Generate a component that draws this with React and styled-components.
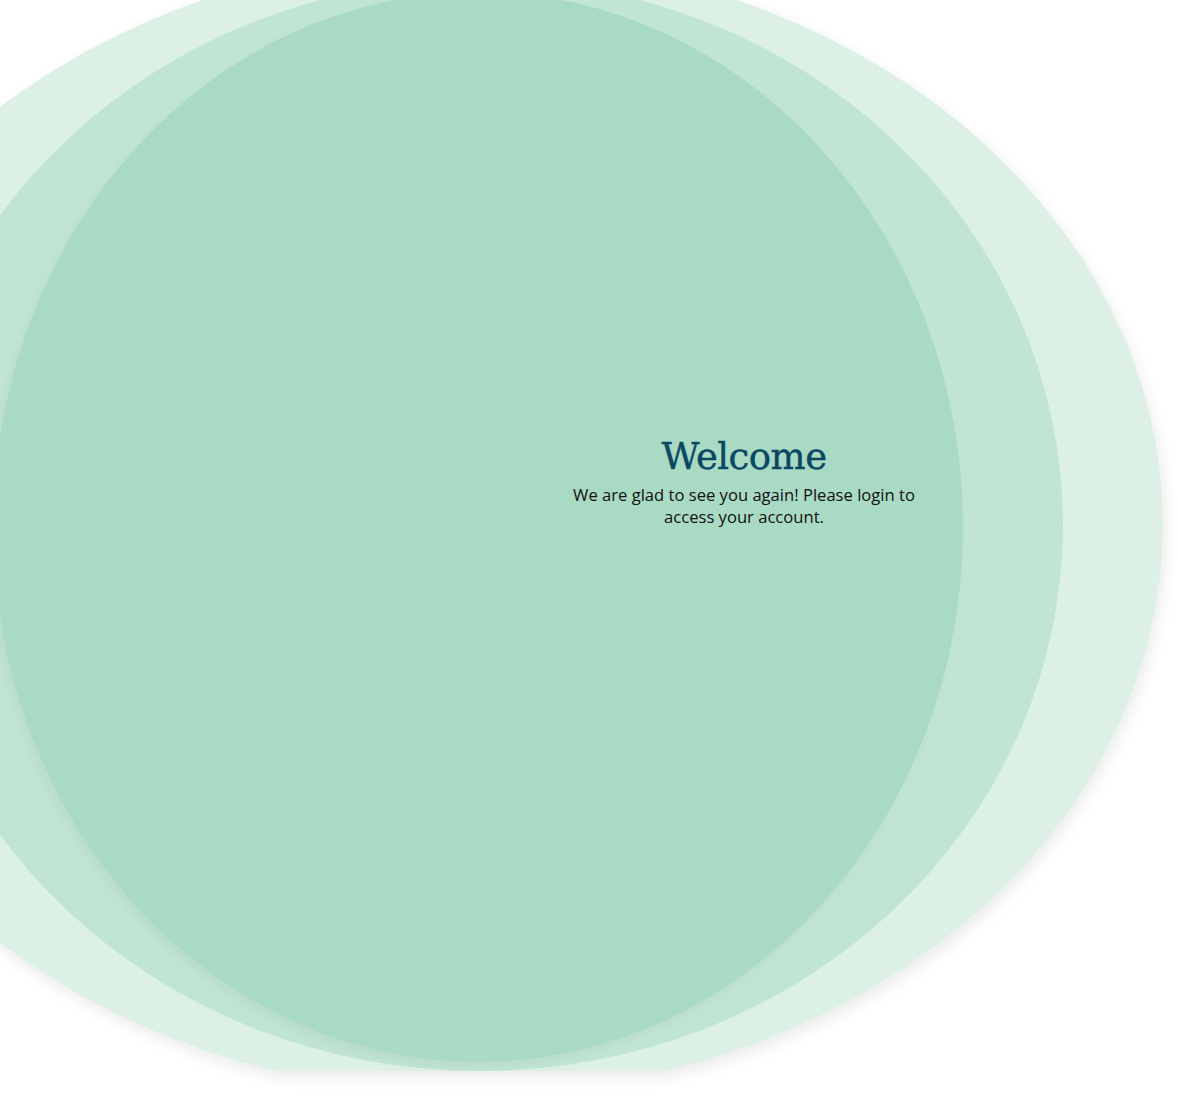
import React from 'react'
import styled, { createGlobalStyle } from 'styled-components'

const GlobalStyle = createGlobalStyle`
    html, body {
        margin: 0;
        padding: 0;
        background: #ffffff;
    }
    * {
        box-sizing: border-box;
    }
`

const Page = styled.div`
    display: grid;
    width: 100%;
    height: 100vh;
    overflow: hidden;
    background: #ffffff;
`

const Backdrop = styled.svg`
    grid-area: 1 / 1;
    display: block;
`

const Intro = styled.section`
    grid-area: 1 / 1;
    align-self: start;
    justify-self: start;
    width: 352px;
    margin: 435px 0 0 568px;
    display: flex;
    flex-direction: column;
    align-items: center;
    gap: 6px;
    text-align: center;
    z-index: 1;
`

const Title = styled.h1`
    margin: 0;
    font-family: "DejaVu Serif", "Liberation Serif", serif;
    font-weight: 400;
    font-size: 37px;
    line-height: 43px;
    letter-spacing: -0.5px;
    color: #0a4862;
    -webkit-text-stroke: 0.4px #0a4862;
`

const Subtitle = styled.p`
    margin: 0;
    font-family: "Open Sans", "Noto Sans", sans-serif;
    font-size: 16.6px;
    line-height: 22px;
    color: #111111;
`

// three stacked ovals, light to dark, cut off along a common bottom line
const blobs = [
    { cx: 470, cy: 525, rx: 693, ry: 569, fill: '#dcf0e6' },
    { cx: 480, cy: 525, rx: 583, ry: 546, fill: '#c1e5d5' },
    { cx: 478, cy: 527, rx: 485, ry: 535, fill: '#a9dac4', shade: true },
]

function Blobs() {
    return (
        <Backdrop width="1178" height="1099" viewBox="0 0 1178 1099">
            <defs>
                <clipPath id="cut">
                    <rect x="-200" y="-200" width="1600" height="1271" />
                </clipPath>
                <filter id="outerShadow" x="-20%" y="-20%" width="140%" height="140%">
                    <feDropShadow dx="3" dy="6" stdDeviation="7" floodColor="#000" floodOpacity="0.08" />
                </filter>
                <filter id="innerShadow" x="-20%" y="-20%" width="140%" height="140%">
                    <feDropShadow dx="-4" dy="6" stdDeviation="5" floodColor="#000" floodOpacity="0.045" />
                </filter>
            </defs>
            <g filter="url(#outerShadow)">
                <g clipPath="url(#cut)">
                    {blobs.map((b, i) => (
                        <ellipse
                            key={i}
                            cx={b.cx}
                            cy={b.cy}
                            rx={b.rx}
                            ry={b.ry}
                            fill={b.fill}
                            filter={b.shade ? 'url(#innerShadow)' : undefined}
                        />
                    ))}
                </g>
            </g>
        </Backdrop>
    )
}

export default function App() {
    return (
        <Page>
            <GlobalStyle />
            <Blobs />
            <Intro>
                <Title>Welcome</Title>
                <Subtitle>We are glad to see you again! Please login to access your account.</Subtitle>
            </Intro>
        </Page>
    )
}
